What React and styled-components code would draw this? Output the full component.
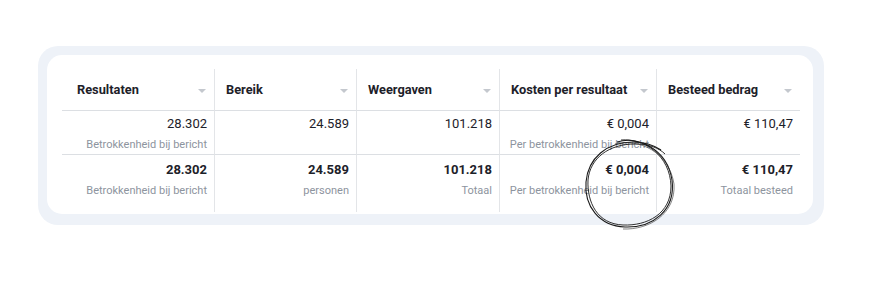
import styled, { createGlobalStyle } from "styled-components";

const Global = createGlobalStyle`
	body {
		margin: 0;
		background: #ffffff;
		font-family: Roboto, "Liberation Sans", Arial, sans-serif;
	}
`;

const Page = styled.div`
	width: 872px;
	height: 289px;
	padding: 46px 0 0 38px;
	box-sizing: border-box;
`;

const Frame = styled.div`
	width: 786px;
	height: 179px;
	box-sizing: border-box;
	padding: 9px 11px 11px 9px;
	background: #eef2f8;
	border-radius: 20px;
`;

const Card = styled.div`
	height: 100%;
	background: #ffffff;
	border-radius: 15px;
	padding: 14px 0 0 15px;
	box-sizing: border-box;
`;

const Table = styled.div`
	position: relative;
	display: grid;
	grid-template-columns: 153px 142px 143px 157px 143px;
	grid-template-rows: 42px 44px 57px;
	width: 738px;
`;

const Cell = styled.div`
	box-sizing: border-box;
	border-right: ${(p) => (p.$last ? "none" : "1px solid #e3e5e8")};
	border-bottom: ${(p) => (p.$bottom ? "none" : "1px solid #dcdfe3")};
	padding: ${(p) =>
		p.$head ? `0 8px 0 ${p.$first ? 15 : 11}px` : `${p.$bottom ? 7 : 5}px 7px 0 8px`};
	display: flex;
	flex-direction: ${(p) => (p.$head ? "row" : "column")};
	align-items: ${(p) => (p.$head ? "center" : "flex-end")};
	justify-content: ${(p) => (p.$head ? "space-between" : "flex-start")};
`;

const HeadLabel = styled.span`
	font-size: 12.8px;
	font-weight: 700;
	color: #1d2129;
	white-space: nowrap;
`;

const Caret = styled.span`
	width: 0;
	height: 0;
	border-left: 4px solid transparent;
	border-right: 4px solid transparent;
	border-top: 4px solid #c4c8ce;
	margin-top: 2px;
`;

const Value = styled.span`
	font-size: 13px;
	line-height: 16px;
	font-weight: ${(p) => (p.$bold ? 700 : 400)};
	color: #1d2129;
	white-space: nowrap;
`;

const Sub = styled.span`
	margin-top: 6px;
	font-size: 11px;
	line-height: 14px;
	color: #8d949e;
	white-space: nowrap;
`;

const Scribble = styled.svg`
	position: absolute;
	left: 513px;
	top: 59px;
	width: 105px;
	height: 105px;
	pointer-events: none;
	overflow: visible;
`;

const columns = ["Resultaten", "Bereik", "Weergaven", "Kosten per resultaat", "Besteed bedrag"];

const rows = [
	[
		["28.302", "Betrokkenheid bij bericht"],
		["24.589", ""],
		["101.218", ""],
		["€ 0,004", "Per betrokkenheid bij bericht"],
		["€ 110,47", ""],
	],
	[
		["28.302", "Betrokkenheid bij bericht"],
		["24.589", "personen"],
		["101.218", "Totaal"],
		["€ 0,004", "Per betrokkenheid bij bericht"],
		["€ 110,47", "Totaal besteed"],
	],
];

export default function App() {
	return (
		<Page>
			<Global />
			<Frame>
				<Card>
					<Table>
						{columns.map((c, i) => (
							<Cell key={c} $head $first={i === 0} $last={i === columns.length - 1}>
								<HeadLabel>{c}</HeadLabel>
								<Caret />
							</Cell>
						))}
						{rows.map((row, r) =>
							row.map(([value, sub], i) => (
								<Cell
									key={r + "-" + i}
									$last={i === row.length - 1}
									$bottom={r === rows.length - 1}
								>
									<Value $bold={r === 1}>{value}</Value>
									{sub && <Sub>{sub}</Sub>}
								</Cell>
							))
						)}
						{/* hand-drawn circle around the total cost */}
						<Scribble viewBox="0 0 105 105">
							<path
								d="M42 14 C62 8, 92 20, 97 52 C101 82, 78 100, 50 99 C24 98, 9 78, 11 54 C13 30, 32 14, 58 14 C72 14, 80 18, 86 22"
								fill="none"
								stroke="#1a1a1a"
								strokeWidth="1.1"
							/>
							<path
								d="M46 12 C70 10, 95 28, 96 58 C96 86, 72 98, 48 97 C22 96, 12 74, 13 52 C15 30, 34 16, 60 16 C74 16, 84 20, 90 26"
								fill="none"
								stroke="#1a1a1a"
								strokeWidth="0.9"
							/>
							<path
								d="M40 16 C64 10, 94 24, 99 56 C101 86, 74 102, 48 101"
								fill="none"
								stroke="#333"
								strokeWidth="0.6"
							/>
						</Scribble>
					</Table>
				</Card>
			</Frame>
		</Page>
	);
}
